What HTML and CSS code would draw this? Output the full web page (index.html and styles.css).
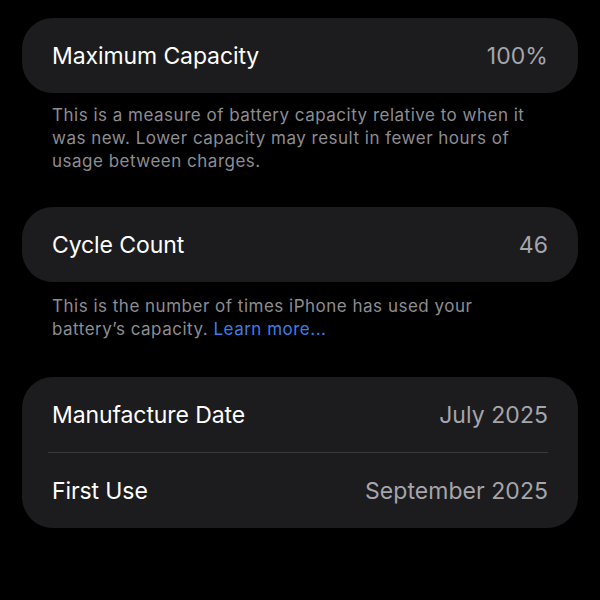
FILE: index.html
```html
<!DOCTYPE html>
<html>
<head>
<meta charset="utf-8">
<link rel="stylesheet" href="styles.css">
</head>
<body>
<main class="page">
  <section class="card">
    <div class="row"><span class="label">Maximum Capacity</span><span class="value">100%</span></div>
  </section>
  <p class="note note-first">This is a measure of battery capacity relative to when it<br>was new. Lower capacity may result in fewer hours of<br>usage between charges.</p>
  <section class="card">
    <div class="row"><span class="label">Cycle Count</span><span class="value">46</span></div>
  </section>
  <p class="note note-second">This is the number of times iPhone has used your<br>battery’s capacity. <a class="link" href="#">Learn more...</a></p>
  <section class="card card-group">
    <div class="row"><span class="label">Manufacture Date</span><span class="value">July 2025</span></div>
    <div class="sep"></div>
    <div class="row"><span class="label">First Use</span><span class="value">September 2025</span></div>
  </section>
</main>
</body>
</html>
```
FILE: styles.css
```css
html, body {
  margin: 0;
  background: #000;
}
body {
  font-family: Inter, "Noto Sans", sans-serif;
  -webkit-font-smoothing: antialiased;
}
.page {
  padding: 18px 22px 0 22px;
  display: flex;
  flex-direction: column;
}
.card {
  background: #1c1c1e;
  border-radius: 31px;
  padding: 0 30px;
}
.row {
  height: 75px;
  display: flex;
  align-items: center;
  justify-content: space-between;
}
.label {
  color: #fff;
  font-size: 23px;
  letter-spacing: -0.1px;
}
.value {
  color: #a5a5aa;
  font-size: 23px;
  letter-spacing: 0.05px;
}
.sep {
  height: 1px;
  background: #3a3a3c;
  margin: 0 0 0 -4px;
}
.note {
  margin: 0;
  padding: 0 30px;
  color: #8d8d92;
  font-size: 17px;
  line-height: 23px;
  letter-spacing: 0.5px;
}
.note-first {
  margin-top: 11px;
  margin-bottom: 34px;
}
.note-second {
  margin-top: 13px;
  margin-bottom: 36px;
}
.link {
  color: #3b7fe6;
  text-decoration: none;
}
```
